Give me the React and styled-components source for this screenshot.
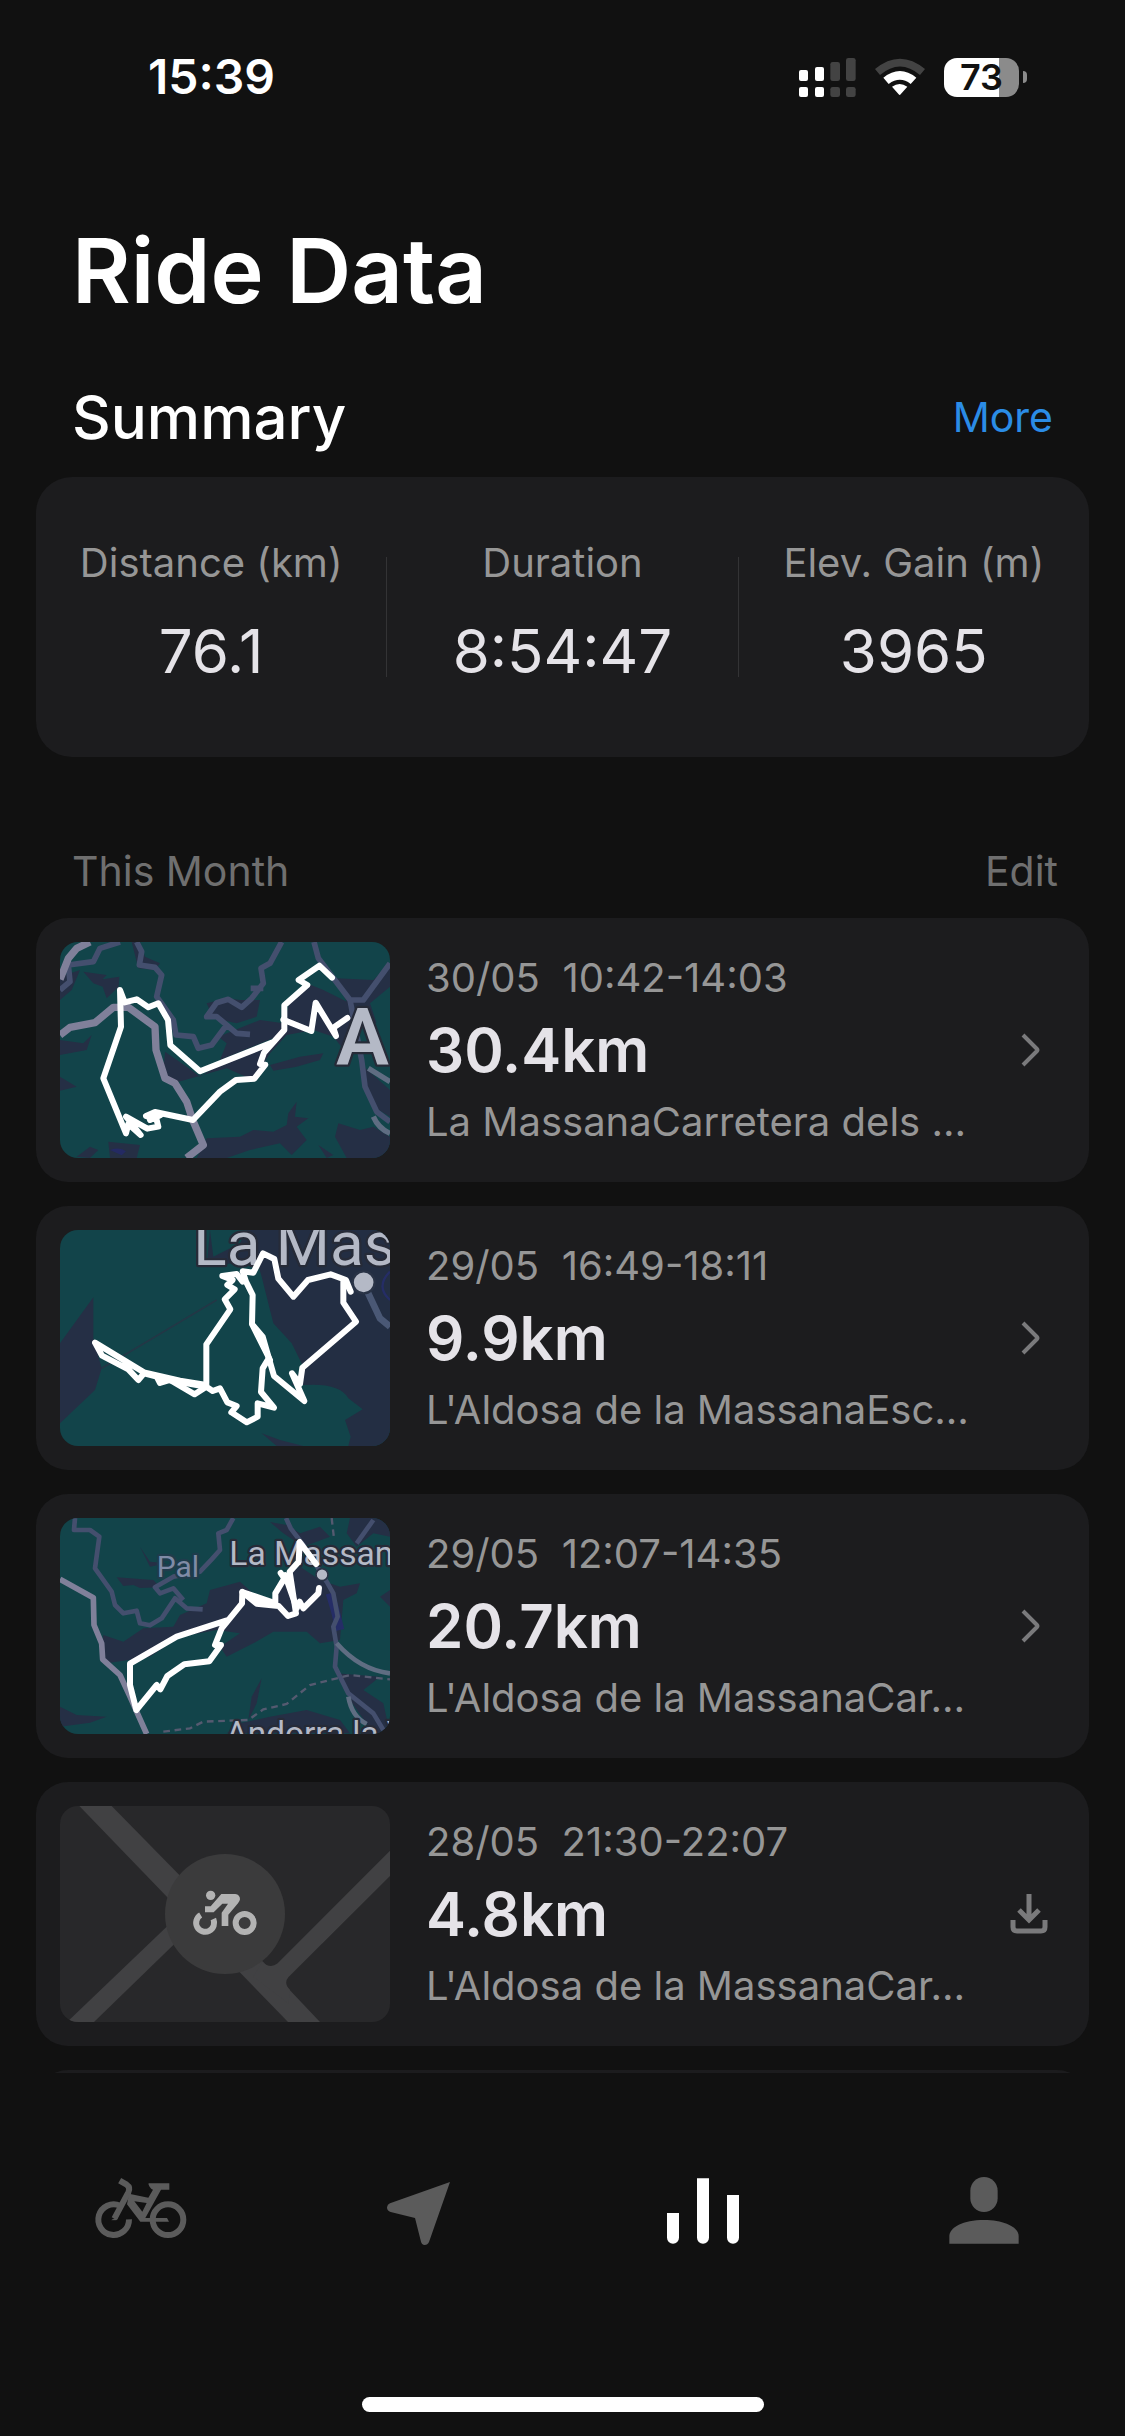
import React from 'react';
import styled, { createGlobalStyle } from 'styled-components';

const GlobalStyle = createGlobalStyle`
  * {
    box-sizing: border-box;
  }
  body {
    margin: 0;
    background-color: #111111;
    font-family: 'Inter', 'Liberation Sans', sans-serif;
    color: #ffffff;
  }
  h1, h2, h3, p, dl, dt, dd, ul {
    margin: 0;
    padding: 0;
  }
  button {
    background: none;
    border: 0;
    padding: 0;
    font: inherit;
    color: inherit;
    cursor: pointer;
  }
  svg {
    display: block;
  }
`;

const Screen = styled.div`
  min-height: 100vh;
  display: flex;
  flex-direction: column;
`;

const StatusBar = styled.header`
  display: flex;
  justify-content: space-between;
  align-items: center;
  height: 154px;
  padding: 0 98px 0 148px;
`;

const Clock = styled.time`
  font-size: 48px;
  line-height: 60px;
  font-weight: 600;
`;

const StatusIcons = styled.div`
  display: flex;
  align-items: center;
  gap: 19px;
`;

const BatteryWrap = styled.div`
  display: flex;
  align-items: center;
  gap: 4px;
`;

const BatteryBody = styled.span`
  width: 75px;
  height: 39px;
  border-radius: 13px;
  background: linear-gradient(to right, #ffffff 73%, #8b8b8b 73%);
  color: #111111;
  font-size: 36px;
  line-height: 39px;
  font-weight: 600;
  text-align: center;
`;

const BatteryTip = styled.span`
  width: 4px;
  height: 12px;
  border-radius: 0 4px 4px 0;
  background-color: #8b8b8b;
`;

const Main = styled.main`
  padding: 0 36px;
`;

const PageTitle = styled.h1`
  padding: 65px 36px 64px;
  font-size: 90px;
  line-height: 104px;
  font-weight: 600;
`;

const SectionHead = styled.div`
  display: flex;
  justify-content: space-between;
  align-items: center;
  padding: 0 36px 0 36px;
  margin-bottom: 30px;
`;

const SectionTitle = styled.h2`
  font-size: 60px;
  line-height: 60px;
  font-weight: 500;
`;

const MoreLink = styled.a`
  font-size: 41px;
  line-height: 60px;
  color: #2b8ce6;
  text-decoration: none;
`;

const MonthHead = styled(SectionHead)`
  padding-right: 31px;
  margin: 87px 0 20px;
`;

const MonthTitle = styled.h2`
  font-size: 41px;
  line-height: 54px;
  font-weight: 400;
  color: #6f6f6f;
`;

const EditButton = styled.button`
  font-size: 41px;
  line-height: 54px;
  color: #6f6f6f;
`;

const SummaryCard = styled.dl`
  display: flex;
  align-items: center;
  padding: 64px 0;
  border-radius: 36px;
  background-color: #1c1c1e;
`;

const Stat = styled.div`
  flex: 1 1 0;
  display: flex;
  flex-direction: column;
  align-items: center;
  gap: 24px;
`;

const StatLabel = styled.dt`
  font-size: 40px;
  line-height: 44px;
  color: #969696;
  white-space: nowrap;
`;

const StatValue = styled.dd`
  font-size: 60px;
  line-height: 84px;
  color: #e5e3e8;
`;

const StatDivider = styled.div`
  width: 1px;
  height: 120px;
  background-color: #333335;
`;

const RideList = styled.ul`
  display: flex;
  flex-direction: column;
  gap: 24px;
  list-style: none;
`;

const RideCard = styled.li`
  display: flex;
  align-items: center;
  padding: 24px 36px 24px 24px;
  border-radius: 32px;
  background-color: #1c1c1e;
`;

const Thumb = styled.div`
  flex: none;
  width: 330px;
  height: 216px;
  border-radius: 18px;
  overflow: hidden;
  svg {
    width: 100%;
    height: 100%;
  }
`;

const RideInfo = styled.div`
  flex: 1 1 0;
  min-width: 0;
  margin-left: 36px;
`;

const RideText = styled.p`
  font-size: 40px;
  line-height: 56px;
  color: #969696;
  white-space: pre;
  overflow: hidden;
  text-overflow: ellipsis;
`;

const RideDistance = styled.h3`
  font-size: 60px;
  line-height: 88px;
  font-weight: 600;
  color: #e5e3e8;
`;

const RideAction = styled.button`
  flex: none;
  width: 48px;
  height: 48px;
`;

// top edge of the card that scrolls in under the tab bar
const CardPeek = styled.div`
  height: 3px;
  margin-top: 24px;
  overflow: hidden;
  &::before {
    content: '';
    display: block;
    height: 264px;
    border-radius: 32px;
    background-color: #1c1c1e;
  }
`;

const TabBar = styled.nav`
  display: flex;
  padding-top: 90px;
`;

const Tab = styled.a`
  flex: 1 1 0;
  display: flex;
  justify-content: center;
  color: ${({ $active }) => ($active ? '#ffffff' : '#5b5b5b')};
  svg {
    width: 96px;
    height: 96px;
  }
`;

const HomeIndicator = styled.div`
  width: 402px;
  height: 15px;
  margin: auto auto 24px;
  border-radius: 8px;
  background-color: #ffffff;
`;

const SignalIcon = () => (
  <svg width="57" height="39" viewBox="87 78 171 117" aria-hidden="true">
    <g fill="#fff">
      <rect x="87" y="114" width="27" height="33" rx="6" />
      <rect x="135" y="105" width="27" height="42" rx="6" />
      <rect x="87" y="165" width="27" height="30" rx="6" />
      <rect x="135" y="165" width="27" height="30" rx="6" />
    </g>
    <g fill="#434343">
      <rect x="181" y="90" width="29" height="57" rx="7" />
      <rect x="228" y="78" width="29" height="69" rx="7" />
      <rect x="181" y="165" width="29" height="30" rx="7" />
      <rect x="228" y="165" width="29" height="30" rx="7" />
    </g>
  </svg>
);

const WifiIcon = () => (
  <svg width="50" height="39" viewBox="317 78 150 117" aria-hidden="true">
    <path d="M317 111 Q392 49 467 111 L452 129 Q392 78 332 129 Z" fill="#434343" />
    <path d="M342 137 Q392 97 441 137 L424 156 Q392 131 358 156 Z" fill="#fff" />
    <path d="M368 164 Q391 148 414 164 L394 187 Q391 191 388 187 Z" fill="#fff" />
  </svg>
);

const ChevronIcon = () => (
  <svg width="48" height="48" viewBox="0 0 48 48" fill="none" stroke="#7a7a7c" strokeWidth="4" aria-hidden="true">
    <path d="M18 9 L32 23 Q33 24 32 25 L18 39" />
  </svg>
);

const DownloadIcon = () => (
  <svg width="48" height="48" viewBox="0 0 48 48" fill="none" stroke="#7a7a7c" strokeWidth="5" aria-hidden="true">
    <path d="M24 4 V31 M14 20 L24 30 L34 20" />
    <path d="M8 30 V37 Q8 41 12 41 H36 Q40 41 40 37 V30" />
  </svg>
);

const MapLabel = styled.text`
  font-family: 'Roboto', sans-serif;
  fill: ${({ $dim }) => ($dim ? '#7f8ba6' : '#b4b9c6')};
  stroke: ${({ $dim }) => ($dim ? '#1f3c4c' : '#262b38')};
  stroke-width: 14px;
  stroke-linejoin: round;
  paint-order: stroke;
`;

const EscaldesMap = () => (
  <svg viewBox="60 66 990 648" aria-hidden="true">
    <rect x="60" y="66" width="990" height="648" fill="#12444a" />
    <g fill="#252f45">
      <path d="M130 155 L200 165 L188 178 L238 170 L236 200 L200 235 L188 200 L160 190 Z" />
      <path d="M60 360 L130 370 L155 345 L140 390 L60 405 Z M60 470 L110 500 L60 512 Z" />
      <path d="M275 66 L300 66 L315 110 L360 130 L345 150 L295 145 Z" />
      <path d="M60 170 L120 150 L95 210 L60 240 Z" />
      <path d="M375 395 L440 440 L480 470 L560 420 L700 370 L735 300 L750 240 L800 190 L850 210 L930 250 L970 300 L920 400 L880 350 L820 330 L740 345 L690 400 L640 480 L560 445 L400 490 L370 455 Z" />
      <path d="M690 435 L780 410 L850 400 L840 420 L770 440 L700 452 Z" />
      <path d="M500 250 L560 235 L600 240 L660 240 L650 290 L590 310 L520 295 Z" />
      <path d="M535 350 L660 300 L730 310 L735 340 L540 420 L560 370 Z" />
      <path d="M500 655 L600 650 L640 630 L700 635 L740 615 L745 580 L770 545 L765 590 L805 595 L770 620 L800 660 L755 705 L720 670 L630 690 L560 714 L470 714 Z" />
      <path d="M895 610 L960 630 L1000 620 L1050 650 V714 H920 L885 650 Z" />
      <path d="M890 175 L1000 180 L1050 130 V200 L990 250 L1010 310 L930 270 Z" />
      <path d="M205 665 L300 675 L290 714 H210 Z M110 710 L150 680 L175 690 L150 714 Z" />
      <path d="M960 430 L1050 510 V590 L1000 560 Z M835 675 L880 705 L860 714 Z" />
    </g>
    <path d="M210 690 Q240 680 258 694 L245 706 Z" fill="#242a63" />
    <g fill="none" stroke="#444f6e" strokeWidth="17" strokeLinejoin="round">
      <path d="M60 210 L90 185 L85 135 L160 125 L180 85 L240 66" />
      <path d="M290 66 L305 95 L298 135 L345 142 L365 165 L350 230 L400 300 L408 345 L460 350 L475 385 L515 375 L560 315 L590 340 L630 343 M560 315 L530 290 L500 290 L530 248 L565 238 L605 262 L635 235 L670 190 L663 145 L690 130 L725 66 M670 205 L632 205" />
      <path d="M822 66 L835 115 L930 240 L970 240 L1050 130 M930 240 L965 420 L975 500 L1010 575 L1050 605" />
    </g>
    <g fill="none" stroke="#80809a" strokeWidth="22" strokeLinejoin="round">
      <path d="M60 178 L85 115 L110 85 L150 66" />
      <path d="M60 345 L90 322 L165 308 L220 262 L265 262 L345 320 L348 390 L375 475 L405 490 L440 545 L458 600 L490 675 L440 714" />
    </g>
    <path d="M985 445 L1050 485 M1000 590 Q1015 625 1050 640" fill="none" stroke="#5f6d82" strokeWidth="16" />
    <g fill="none" stroke="#fff" strokeWidth="18" strokeLinejoin="round" strokeLinecap="round">
      <path d="M876 173 L838 137 L776 180 L802 195 L733 256 V330 L672 398 L660 432 L676 434 L643 476 L588 480 L540 515 L459 600 L345 576 L318 588 L350 600 L355 620 L322 626 L258 590 L302 645 L265 612 L258 640 L190 475 L243 320 L240 210 L254 247 L290 238 L325 262 L355 250 L384 300 L391 376 L480 454 L700 366" />
      <path d="M730 299 L814 333 L827 248 L888 348 L880 323 L922 294" />
      <path d="M330 588 L362 585 L330 600" />
    </g>
    <MapLabel x="888" y="435" fontSize="238" fontWeight="600">A</MapLabel>
  </svg>
);

const MassanaMap = () => (
  <svg viewBox="60 60 990 648" aria-hidden="true">
    <rect x="60" y="60" width="990" height="648" fill="#12444a" />
    <path d="M510 60 H1050 V708 H925 L932 680 L915 630 L968 598 L925 565 Q900 520 800 525 L755 525 L790 470 L755 400 L700 340 L665 200 L650 150 L500 170 Z" fill="#232e43" />
    <path d="M510 60 H620 L600 100 L520 140 Z" fill="#12444a" />
    <path d="M160 262 L60 400 V640 L165 540 L185 475 L160 385 Z" fill="#252f45" />
    <path d="M665 670 L720 690 L790 708 H710 Z" fill="#252f45" />
    <path d="M185 475 L270 425 L530 270" fill="none" stroke="#233746" strokeWidth="5" />
    <path d="M1050 185 Q1005 230 1050 270" fill="none" stroke="#252d66" strokeWidth="7" />
    <path d="M980 240 L1020 325 L1050 350" fill="none" stroke="#4a5875" strokeWidth="20" />
    <MapLabel x="460" y="165" fontSize="186">La Mas</MapLabel>
    <circle cx="971" cy="217" r="33" fill="#b4b9c6" stroke="#293346" strokeWidth="7" />
    <g fill="none" stroke="#fff" strokeWidth="18" strokeLinejoin="round" strokeLinecap="round">
      <path d="M932 245 L918 210 L872 193 L804 210 L760 260 L715 206 L703 147 L669 130 L640 188 L608 184 L618 215 L638 255 L636 343 L668 380 L702 498 L793 573 L756 490 L780 522 L787 473 L948 335 L910 278 V212" />
      <path d="M608 215 L590 192 L547 198 L578 210 L562 225 L584 238 L554 268 L571 298 L499 403 V520" />
      <path d="M499 525 L420 512 L312 487 L165 398 L186 437 L265 478 L295 510 L312 490 L350 500 L360 519 L390 510 L464 553 L499 530 L518 543 L540 535 L562 577 L590 588 L574 607 L620 637 L653 620 V580 L702 593 L663 546 L668 475 L683 450" />
      <path d="M370 507 L495 530 M640 350 L690 450" />
    </g>
  </svg>
);

const PalMap = () => (
  <svg viewBox="60 54 990 648" aria-hidden="true">
    <rect x="60" y="54" width="990" height="648" fill="#12444a" />
    <g fill="#252f45">
      <path d="M180 475 L190 405 L250 425 L310 385 L400 380 L420 345 L500 310 L510 270 L600 245 L650 290 L700 300 L740 220 L780 200 L840 240 L900 260 L960 250 L950 280 L910 300 L900 420 L840 430 L800 395 L700 395 L640 430 L560 470 L540 440 L600 400 L530 390 L420 410 L330 470 L200 490 Z" />
      <path d="M690 66 L740 75 L780 100 L840 80 L870 110 L790 140 L730 100 Z" />
      <path d="M930 54 H1050 V110 L1000 100 L950 140 L920 100 Z" />
      <path d="M230 232 L340 240 L360 262 L300 264 L280 255 L250 258 Z M300 140 L330 185 L380 190 L330 200 Z" />
      <path d="M665 535 L650 610 L625 660 L635 590 Z" />
      <path d="M60 620 L110 645 L200 650 L150 668 L60 680 Z" />
      <path d="M690 650 L800 630 L900 660 L930 700 H560 L600 670 Z" />
      <path d="M890 520 L1020 530 L970 570 L1030 610 L1050 700 H1000 L930 600 Z M1020 290 L1050 270 V320 Z" />
    </g>
    <path d="M870 280 L885 330 L900 390" fill="none" stroke="#252d66" strokeWidth="26" />
    <g fill="none" stroke="#444f6e" strokeWidth="14" strokeLinejoin="round">
      <path d="M105 54 L102 90 L150 90 L178 110 L165 205 L215 275 L225 315 L250 340 L290 332 L300 370 L330 376 L365 355 L405 295 L440 325 L488 328 M430 300 L400 265 L360 280 L345 262 L400 230 L480 215 L515 178 L540 150 L535 100 L560 90 L580 54" />
      <path d="M738 54 L752 85 L790 135 L860 245 L880 280 L893 350 L880 380 L890 440 L885 500 L925 580 L1000 640 L1030 690" />
      <path d="M1000 60 L950 130" />
    </g>
    <g fill="none" stroke="#80809a" strokeWidth="17" strokeLinejoin="round">
      <path d="M60 238 L160 293 L162 375 L185 430 L188 478 L240 525 L270 590 L320 702" />
    </g>
    <path d="M890 430 Q960 510 1050 520 M925 590 Q935 650 980 672" fill="none" stroke="#5f6d82" strokeWidth="14" />
    <path d="M370 695 L450 685 L490 665 L625 660 L670 628 L740 612 L810 555 L930 525 L1050 538 M875 54 L882 115" fill="none" stroke="#555a70" strokeWidth="7" strokeDasharray="20 14" />
    <MapLabel x="350" y="230" fontSize="90" $dim>Pal</MapLabel>
    <MapLabel x="568" y="195" fontSize="101">La Massan</MapLabel>
    <MapLabel x="558" y="735" fontSize="100">Andorra la V</MapLabel>
    <circle cx="846" cy="224" r="18" fill="#b4b9c6" stroke="#293346" strokeWidth="5" />
    <g fill="none" stroke="#fff" strokeWidth="18" strokeLinejoin="round" strokeLinecap="round">
      <path d="M828 192 L779 126 L776 185 L749 215 L768 340 L744 348 L716 318 L650 311 L607 276 L606 310 L545 385 L525 435 L543 435 L508 484 L433 493 L382 528 L361 568 L350 555 L289 630 L270 555 V491 L410 410 L558 362" />
      <path d="M722 219 L733 235 L706 280 V315 L630 290 M735 225 L770 325 L779 305 L790 325 L835 280 L837 264" />
      <path d="M607 276 L700 308" />
    </g>
  </svg>
);

const EmptyMap = () => (
  <svg viewBox="60 78 990 648" aria-hidden="true">
    <rect x="60" y="78" width="990" height="648" fill="#28282a" />
    <path d="M118 78 H215 L560 430 L840 726 H744 L560 536 Z" fill="#414143" />
    <path d="M90 718 L380 440 L410 485 L162 726 H84 Z" fill="#414143" />
    <path d="M1050 212 L713 550 Q690 568 667 545 L640 590 L745 670 L750 630 Q730 610 745 592 L1050 288 Z" fill="#414143" />
    <circle cx="555" cy="402" r="180" fill="#3b3b3c" />
    <g fill="#b3b3b3">
      <circle cx="512" cy="346" r="14" />
      <path d="M544 342 H586 Q600 344 600 358 Q599 364 594 370 L565 404 V438 H545 V398 L564 371 H547 L521 397 H495 V379 H512 Z" />
    </g>
    <g fill="none" stroke="#b3b3b3" strokeWidth="18">
      <circle cx="614" cy="429" r="27" />
      <path d="M482 405 A27 27 0 1 0 520 417" />
    </g>
  </svg>
);

const BikeIcon = () => (
  <svg viewBox="98 66 288 288" fill="none" stroke="currentColor" strokeWidth="18" aria-hidden="true">
    <path d="M179 194 A46 46 0 1 0 206 235" />
    <circle cx="323" cy="236" r="46" />
    <path d="M178 119 L199 131 Q211 139 204 154 L162 233" />
    <path d="M154 237 L174 226 L168 237 Z" strokeWidth="1" fill="currentColor" />
    <path d="M266 127 H327 V146 H302 L255 231 H320 L326 242 H240 L200 190 L206 158 L264 170 L278 146 Q268 142 264 128 Z M222 181 L246 212 L259 186 Z" fill="currentColor" fillRule="evenodd" stroke="none" />
  </svg>
);

const LocationIcon = () => (
  <svg viewBox="942 66 288 288" fill="currentColor" aria-hidden="true">
    <path d="M1170 123 L1107 303 Q1103 312 1094 312 Q1085 311 1083 302 L1065 231 L992 213 Q981 210 981 199 Q982 190 990 187 Z" />
  </svg>
);

const StatsIcon = () => (
  <svg viewBox="105 66 288 288" fill="currentColor" aria-hidden="true">
    <path d="M141 216 H177 V290 A18 18 0 0 1 141 290 Z" />
    <path d="M231 112 H267 V290 A18 18 0 0 1 231 290 Z" />
    <path d="M321 162 H357 V290 A18 18 0 0 1 321 290 Z" />
  </svg>
);

const ProfileIcon = () => (
  <svg viewBox="949 66 288 288" fill="currentColor" aria-hidden="true">
    <rect x="1052" y="108" width="82" height="105" rx="41" />
    <path d="M989 308 V285 C989 260 1030 237 1093 237 C1156 237 1197 260 1197 285 V308 Z" />
  </svg>
);

const stats = [
  { label: 'Distance (km)', value: '76.1' },
  { label: 'Duration', value: '8:54:47' },
  { label: 'Elev. Gain (m)', value: '3965' },
];

const rides = [
  { time: '30/05  10:42-14:03', distance: '30.4km', place: 'La MassanaCarretera dels …', Map: EscaldesMap },
  { time: '29/05  16:49-18:11', distance: '9.9km', place: "L'Aldosa de la MassanaEsc…", Map: MassanaMap },
  { time: '29/05  12:07-14:35', distance: '20.7km', place: "L'Aldosa de la MassanaCar…", Map: PalMap },
  { time: '28/05  21:30-22:07', distance: '4.8km', place: "L'Aldosa de la MassanaCar…", Map: EmptyMap, pending: true },
];

const tabs = [
  { name: 'Bike', Icon: BikeIcon },
  { name: 'Navigation', Icon: LocationIcon },
  { name: 'Ride data', Icon: StatsIcon, active: true },
  { name: 'Profile', Icon: ProfileIcon },
];

const Ride = ({ time, distance, place, Map, pending }) => (
  <RideCard>
    <Thumb>
      <Map />
    </Thumb>
    <RideInfo>
      <RideText>{time}</RideText>
      <RideDistance>{distance}</RideDistance>
      <RideText>{place}</RideText>
    </RideInfo>
    <RideAction type="button" aria-label={pending ? 'Download ride' : 'Open ride'}>
      {pending ? <DownloadIcon /> : <ChevronIcon />}
    </RideAction>
  </RideCard>
);

const App = () => {
  return (
    <Screen>
      <GlobalStyle />
      <StatusBar>
        <Clock>15:39</Clock>
        <StatusIcons>
          <SignalIcon />
          <WifiIcon />
          <BatteryWrap>
            <BatteryBody>73</BatteryBody>
            <BatteryTip />
          </BatteryWrap>
        </StatusIcons>
      </StatusBar>
      <Main>
        <PageTitle>Ride Data</PageTitle>
        <SectionHead>
          <SectionTitle>Summary</SectionTitle>
          <MoreLink href="#more">More</MoreLink>
        </SectionHead>
        <SummaryCard>
          {stats.map((stat, i) => (
            <React.Fragment key={stat.label}>
              {i > 0 && <StatDivider />}
              <Stat>
                <StatLabel>{stat.label}</StatLabel>
                <StatValue>{stat.value}</StatValue>
              </Stat>
            </React.Fragment>
          ))}
        </SummaryCard>
        <MonthHead>
          <MonthTitle>This Month</MonthTitle>
          <EditButton type="button">Edit</EditButton>
        </MonthHead>
        <RideList>
          {rides.map((ride) => (
            <Ride key={ride.time} {...ride} />
          ))}
        </RideList>
        <CardPeek />
      </Main>
      <TabBar>
        {tabs.map(({ name, Icon, active }) => (
          <Tab key={name} href="#" aria-label={name} $active={active}>
            <Icon />
          </Tab>
        ))}
      </TabBar>
      <HomeIndicator />
    </Screen>
  );
};

export default App;
